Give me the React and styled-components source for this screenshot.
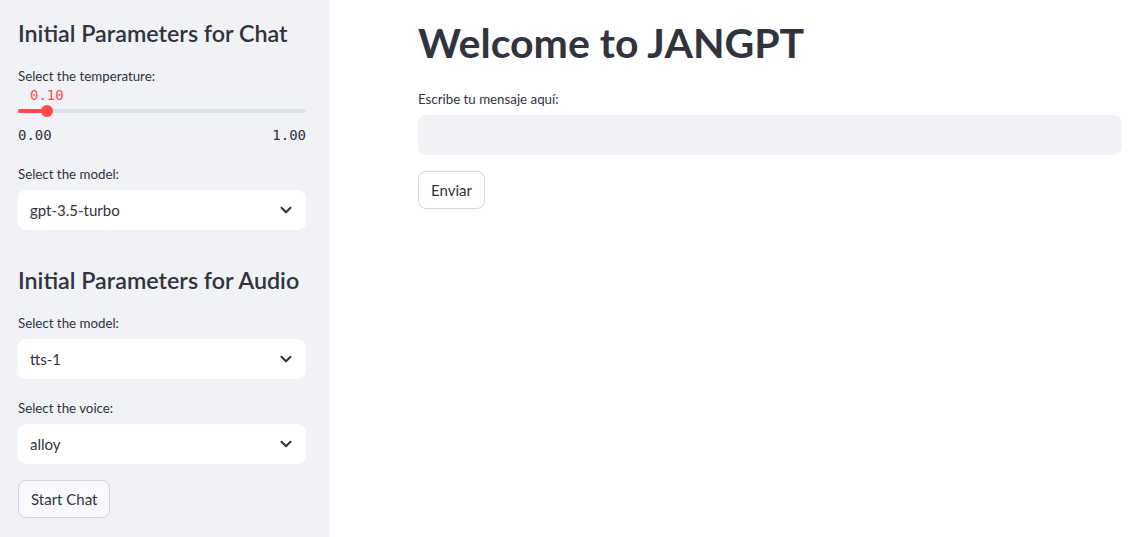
import styled, { createGlobalStyle } from "styled-components";

const GlobalStyle = createGlobalStyle`
    html, body {
        margin: 0;
        padding: 0;
        background: #ffffff;
    }
    body {
        font-family: "Source Sans Pro", Lato, sans-serif;
        color: #31333f;
    }
    * {
        box-sizing: border-box;
    }
`

const Chevron = () => (
    <svg width="18" height="18" viewBox="0 0 24 24" fill="none">
        <polyline points="6 9 12 15 18 9" stroke="#31333f" strokeWidth="2.8" strokeLinecap="round" strokeLinejoin="round" />
    </svg>
);

const Select = ({ label, value, offset }) => (
    <Field $offset={offset}>
        <Label>{label}</Label>
        <SelectBox>
            <span>{value}</span>
            <Chevron />
        </SelectBox>
    </Field>
);

function App() {
    return (
        <>
            <GlobalStyle />
            <Page>
                <Sidebar>
                    <SideTitle>Initial Parameters for Chat</SideTitle>
                    <Field>
                        <Label>Select the temperature:</Label>
                        <SliderBox>
                            <ThumbValue>0.10</ThumbValue>
                            <Track>
                                <Fill style={{ width: "10%" }} />
                                <Thumb style={{ left: "10%" }} />
                            </Track>
                            <TickRow>
                                <span>0.00</span>
                                <span>1.00</span>
                            </TickRow>
                        </SliderBox>
                    </Field>
                    <Select label="Select the model:" value="gpt-3.5-turbo" />
                    <SideTitle $spaced>Initial Parameters for Audio</SideTitle>
                    <Select label="Select the model:" value="tts-1" />
                    <Select label="Select the voice:" value="alloy" offset={3} />
                    <Button>Start Chat</Button>
                </Sidebar>
                <Main>
                    <Title>Welcome to JANGPT</Title>
                    <Field>
                        <Label>Escribe tu mensaje aquí:</Label>
                        <TextInput />
                    </Field>
                    <Button $light>Enviar</Button>
                </Main>
            </Page>
        </>
    );
}

const Page = styled.div`
    display: flex;
    width: 1135px;
    height: 537px;
    overflow: hidden;
`

const Sidebar = styled.div`
    width: 330px;
    flex-shrink: 0;
    background: #f0f2f6;
    padding: 16px 24px 0 18px;

    display: flex;
    flex-direction: column;
    gap: 16px;
`

const SideTitle = styled.h2`
    margin: ${(p) => (p.$spaced ? "17px" : "0")} 0 0 0;
    font-size: 23.3px;
    font-weight: 600;
    line-height: 34px;
    white-space: nowrap;
    color: #31333f;
`

const Field = styled.div`
    display: flex;
    flex-direction: column;
    margin-top: ${(p) => p.$offset || 0}px;
`

const Label = styled.label`
    font-size: 13.3px;
    line-height: 20px;
    margin-bottom: 6px;
    color: #31333f;
`

const SliderBox = styled.div`
    display: flex;
    flex-direction: column;
    margin-top: -5px;
    padding-bottom: 5px;
`

const ThumbValue = styled.div`
    font-family: "DejaVu Sans Mono", "Liberation Mono", monospace;
    font-size: 14px;
    line-height: 16px;
    color: #ff4b4b;
    padding-left: 12px;
`

const Track = styled.div`
    position: relative;
    height: 4px;
    margin: 6px 0 14px;
    border-radius: 2px;
    background: #dfe1e8;
`

const Fill = styled.div`
    height: 100%;
    border-radius: 2px;
    background: #ff4b4b;
`

const Thumb = styled.div`
    position: absolute;
    top: 50%;
    width: 12px;
    height: 12px;
    margin: -6px 0 0 -6px;
    border-radius: 50%;
    background: #ff4b4b;
`

const TickRow = styled.div`
    display: flex;
    justify-content: space-between;
    font-family: "DejaVu Sans Mono", "Liberation Mono", monospace;
    font-size: 14px;
    line-height: 16px;
    color: #31333f;
`

const SelectBox = styled.div`
    height: 40px;
    background: #ffffff;
    border-radius: 8px;
    padding: 0 11px 0 12px;

    display: flex;
    align-items: center;
    justify-content: space-between;

    font-size: 15px;
    color: #31333f;
`

const Button = styled.button`
    align-self: flex-start;
    height: 38px;
    padding: 0 12px;
    border: 1px solid #d5d6da;
    border-radius: 8px;
    background: ${(p) => (p.$light ? "#ffffff" : "#f9f9fb")};
    font-family: inherit;
    font-size: 15px;
    color: #31333f;
`

const Main = styled.div`
    flex: 1;
    padding: 13px 13px 0 88px;

    display: flex;
    flex-direction: column;
    gap: 16px;
`

const Title = styled.h1`
    margin: 0;
    font-size: 41px;
    font-weight: 700;
    line-height: 60px;
    color: #31333f;
`

const TextInput = styled.div`
    height: 40px;
    border-radius: 8px;
    background: #f0f2f6;
`

export default App;
